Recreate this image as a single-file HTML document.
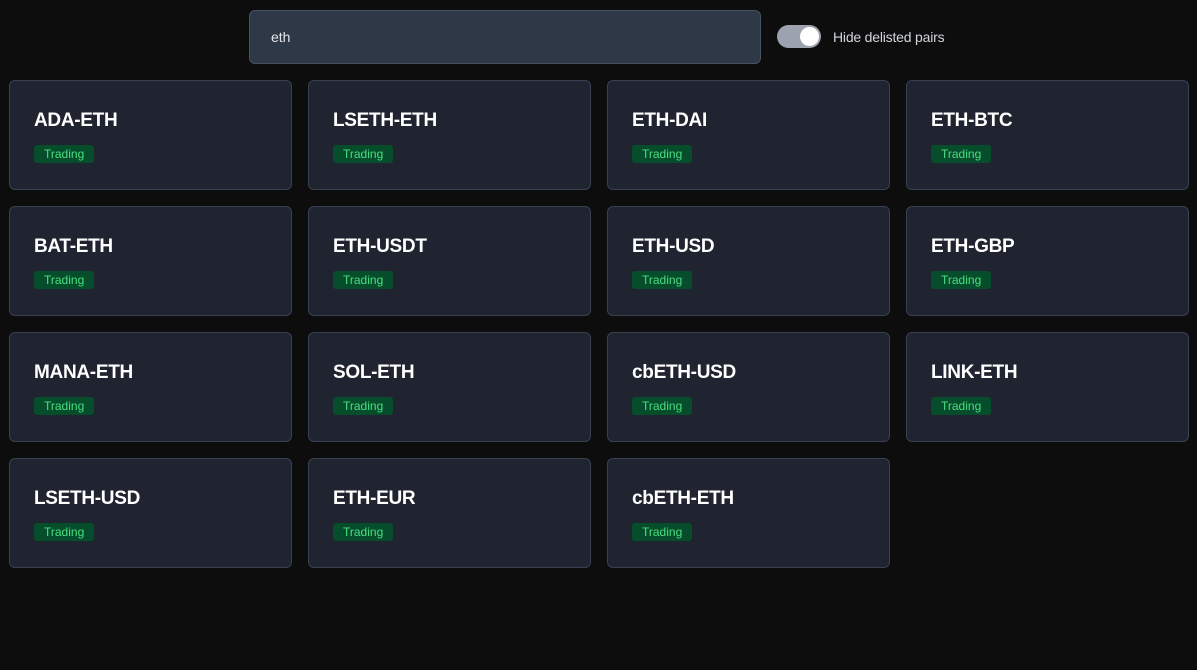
<!DOCTYPE html>
<html><head><style>
body{margin:0;background:#0d0d0d;width:1197px;height:670px;overflow:hidden;font-family:"Liberation Sans",sans-serif;position:relative}
.search{position:absolute;left:249px;top:10px;width:512px;height:54px;background:#2f3847;border:1px solid #465162;border-radius:6px;box-sizing:border-box;color:#e5e7eb;font-size:14px;line-height:52px;padding-left:21px}
.tog{position:absolute;left:777px;top:25px;width:44px;height:23px;border-radius:12px;background:#9ca3af}
.tog::after{content:"";position:absolute;right:2px;top:2px;width:19px;height:19px;border-radius:50%;background:#fff}
.lbl{position:absolute;left:833px;top:29px;color:#d1d5db;font-size:14px;letter-spacing:-0.2px}
.card{position:absolute;width:283px;height:110px;box-sizing:border-box;background:#1f2430;border:1px solid #374151;border-radius:6px}
.card h{position:absolute;left:24px;top:29px;color:#fff;font-weight:bold;font-size:19px;letter-spacing:-0.3px}
.card b{position:absolute;left:24px;top:64px;height:18px;padding:0 10px;background:#064e2b;color:#4ade80;font-weight:normal;font-size:12px;line-height:18px;border-radius:3px}
</style></head><body>
<div class="search">eth</div><div class="tog"></div><div class="lbl">Hide delisted pairs</div>
<div class="card" style="left:9px;top:80px"><h>ADA-ETH</h><b>Trading</b></div>
<div class="card" style="left:308px;top:80px"><h>LSETH-ETH</h><b>Trading</b></div>
<div class="card" style="left:607px;top:80px"><h>ETH-DAI</h><b>Trading</b></div>
<div class="card" style="left:906px;top:80px"><h>ETH-BTC</h><b>Trading</b></div>
<div class="card" style="left:9px;top:206px"><h>BAT-ETH</h><b>Trading</b></div>
<div class="card" style="left:308px;top:206px"><h>ETH-USDT</h><b>Trading</b></div>
<div class="card" style="left:607px;top:206px"><h>ETH-USD</h><b>Trading</b></div>
<div class="card" style="left:906px;top:206px"><h>ETH-GBP</h><b>Trading</b></div>
<div class="card" style="left:9px;top:332px"><h>MANA-ETH</h><b>Trading</b></div>
<div class="card" style="left:308px;top:332px"><h>SOL-ETH</h><b>Trading</b></div>
<div class="card" style="left:607px;top:332px"><h>cbETH-USD</h><b>Trading</b></div>
<div class="card" style="left:906px;top:332px"><h>LINK-ETH</h><b>Trading</b></div>
<div class="card" style="left:9px;top:458px"><h>LSETH-USD</h><b>Trading</b></div>
<div class="card" style="left:308px;top:458px"><h>ETH-EUR</h><b>Trading</b></div>
<div class="card" style="left:607px;top:458px"><h>cbETH-ETH</h><b>Trading</b></div>
</body></html>
